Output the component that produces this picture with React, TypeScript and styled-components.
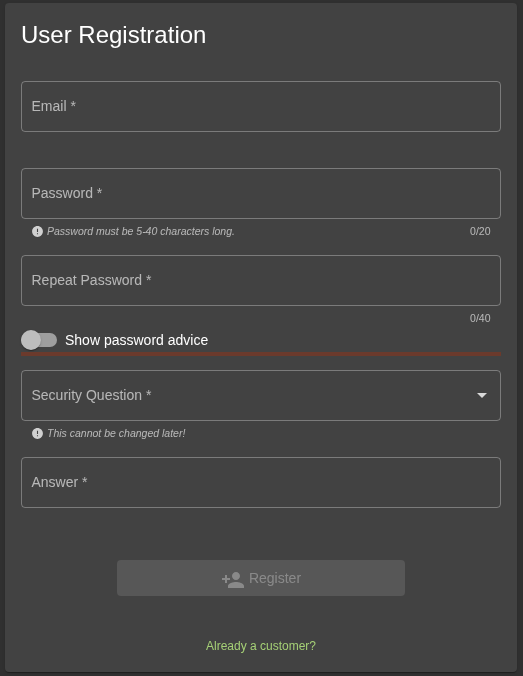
import React from "react";
import styled, { createGlobalStyle } from "styled-components";

const Global = createGlobalStyle`
  html, body { margin: 0; padding: 0; height: 100%; background: #303030; }
  body { font-family: "Liberation Sans", Arial, sans-serif; overflow: hidden; }
  #root { height: 100%; }
  * { box-sizing: border-box; }
`;

const Page = styled.div`
  padding: 3px 6px 4px 5px;
  height: 676px;
`;

const Card = styled.main`
  height: 669px;
  background: #424242;
  border-radius: 4px;
  box-shadow: 0 2px 1px -1px rgba(0,0,0,.2), 0 1px 1px 0 rgba(0,0,0,.14), 0 1px 3px 0 rgba(0,0,0,.12);
  padding: 16px 16px 0;
  display: flex;
  flex-direction: column;
  will-change: transform;
`;

const Title = styled.h1`
  margin: 0;
  height: 62px;
  font-size: 24px;
  line-height: 32px;
  font-weight: 400;
  color: #fff;
`;

const Field = styled.div`
  height: 51px;
  border: 1px solid rgba(255,255,255,.3);
  border-radius: 4px;
  padding: 0 10px 2px 9.5px;
  display: flex;
  align-items: center;
  justify-content: space-between;
`;

const FieldLabel = styled.span`
  font-size: 14px;
  color: rgba(255,255,255,.62);
`;

const Hint = styled.div<{ $h: number }>`
  height: ${(p) => p.$h}px;
  padding: 5px 10px 0;
  display: flex;
  justify-content: space-between;
  font-size: 10.5px;
  line-height: 14px;
  color: rgba(255,255,255,.62);
`;

const HintLeft = styled.span`
  display: flex;
  align-items: center;
  gap: 3px;
  height: 14px;
  font-style: italic;
`;

const Counter = styled.span`
  margin-left: auto;
  margin-right: 0.5px;
`;

const ToggleRow = styled.div`
  height: 20px;
  display: flex;
  align-items: center;
  gap: 8px;
  font-size: 14px;
  color: #fff;
`;

const Toggle = styled.span`
  width: 36px;
  height: 14px;
  border-radius: 7px;
  background: #9e9e9e;
  display: flex;
  align-items: center;
`;

const Knob = styled.span`
  width: 20px;
  height: 20px;
  border-radius: 50%;
  background: #bdbdbd;
  box-shadow: 0 2px 1px -1px rgba(0,0,0,.2), 0 1px 1px 0 rgba(0,0,0,.14), 0 1px 3px 0 rgba(0,0,0,.12);
`;

const Divider = styled.hr`
  margin: 2px 0 14px;
  border: 0;
  height: 4px;
  background: #6b3a2c;
`;

const Spacer = styled.div<{ $h: number }>`
  height: ${(p) => p.$h}px;
`;

const Actions = styled.div`
  display: flex;
  justify-content: center;
`;

const Button = styled.button`
  width: 288px;
  height: 36px;
  border: 0;
  border-radius: 4px;
  background: #575757;
  color: rgba(255,255,255,.3);
  font: 400 14px "Liberation Sans", Arial, sans-serif;
  display: flex;
  align-items: center;
  justify-content: center;
  gap: 4px;
  padding: 0;
`;

const ButtonIcon = styled.svg`
  margin-top: 4px;
`;

const LinkRow = styled.a`
  margin-top: 42px;
  text-align: center;
  font-size: 12px;
  line-height: 16px;
  color: #a5d076;
`;

const Info = () => (
  <svg width="13" height="13" viewBox="0 0 24 24" fill="#d0d0d0">
    <path d="M12 2C6.48 2 2 6.48 2 12s4.48 10 10 10 10-4.48 10-10S17.52 2 12 2zm1 15h-2v-2h2v2zm0-4h-2V7h2v6z" />
  </svg>
);

const Caret = () => (
  <svg width="24" height="24" viewBox="0 0 24 24" fill="rgba(255,255,255,.8)" style={{ marginRight: -4 }}>
    <path d="M7 10l5 5 5-5z" />
  </svg>
);

const PersonAdd = () => (
  <ButtonIcon width="24" height="24" viewBox="0 0 24 24" fill="rgba(255,255,255,.3)">
    <path d="M15 12c2.21 0 4-1.79 4-4s-1.79-4-4-4-4 1.79-4 4 1.79 4 4 4zm-9-2V7H4v3H1v2h3v3h2v-3h3v-2H6zm9 4c-2.67 0-8 1.34-8 4v2h16v-2c0-2.66-5.33-4-8-4z" />
  </ButtonIcon>
);

export default function App() {
  return (
    <>
      <Global />
      <Page>
        <Card>
          <Title>User Registration</Title>
          <Field><FieldLabel>Email *</FieldLabel></Field>
          <Spacer $h={36} />
          <Field><FieldLabel>Password *</FieldLabel></Field>
          <Hint $h={36}>
            <HintLeft><Info />Password must be 5-40 characters long.</HintLeft>
            <Counter>0/20</Counter>
          </Hint>
          <Field><FieldLabel>Repeat Password *</FieldLabel></Field>
          <Hint $h={24}>
            <Counter>0/40</Counter>
          </Hint>
          <ToggleRow>
            <Toggle><Knob /></Toggle>
            Show password advice
          </ToggleRow>
          <Divider />
          <Field><FieldLabel>Security Question *</FieldLabel><Caret /></Field>
          <Hint $h={36}>
            <HintLeft><Info />This cannot be changed later!</HintLeft>
          </Hint>
          <Field><FieldLabel>Answer *</FieldLabel></Field>
          <Spacer $h={52} />
          <Actions>
            <Button type="button"><PersonAdd />Register</Button>
          </Actions>
          <LinkRow>Already a customer?</LinkRow>
        </Card>
      </Page>
    </>
  );
}
